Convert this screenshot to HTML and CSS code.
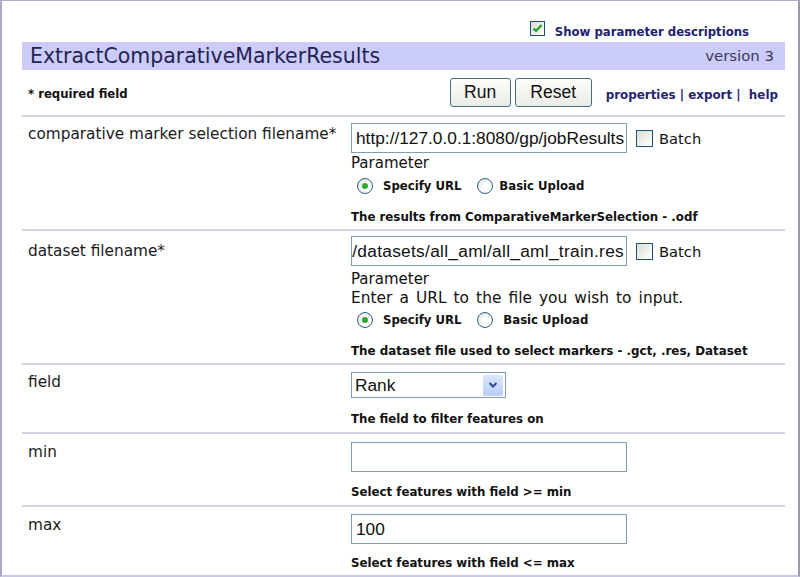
FILE: index.html
```html
<!DOCTYPE html>
<html>
<head>
<meta charset="utf-8">
<link rel="stylesheet" href="styles.css">
</head>
<body>
<div class="frame">
  <div class="topbar">
    <span class="cb checked"><svg viewBox="0 0 15 15" width="15" height="15"><path d="M3.5 7.5 L6 10 L11.5 4" fill="none" stroke="#21a121" stroke-width="2.2"/></svg></span>
    <span class="showdesc">Show parameter descriptions</span>
  </div>
  <div class="titlebar">
    <span class="title">ExtractComparativeMarkerResults</span>
    <span class="version">version 3</span>
  </div>
  <div class="actions">
    <span class="req">* required field</span>
    <div class="btns">
      <button class="btn run">Run</button>
      <button class="btn reset">Reset</button>
      <span class="links">properties | export |&nbsp; help</span>
    </div>
  </div>

  <div class="param p1">
    <div class="label">comparative marker selection filename*</div>
    <div class="ctrl">
      <div class="inrow">
        <div class="input">http://127.0.0.1:8080/gp/jobResults</div>
        <span class="cb batchcb"></span><span class="batch">Batch</span>
      </div>
      <div class="ptext">Parameter</div>
      <div class="radios">
        <span class="radio on"></span><span class="rlabel">Specify URL</span>
        <span class="radio"></span><span class="rlabel second">Basic Upload</span>
      </div>
      <div class="desc">The results from ComparativeMarkerSelection - .odf</div>
    </div>
  </div>

  <div class="param p2">
    <div class="label">dataset filename*</div>
    <div class="ctrl">
      <div class="inrow">
        <div class="input clip"><span>/datasets/all_aml/all_aml_train.res</span></div>
        <span class="cb batchcb"></span><span class="batch">Batch</span>
      </div>
      <div class="ptext">Parameter</div>
      <div class="ptext enter">Enter a URL to the file you wish to input.</div>
      <div class="radios">
        <span class="radio on"></span><span class="rlabel">Specify URL</span>
        <span class="radio"></span><span class="rlabel second">Basic Upload</span>
      </div>
      <div class="desc">The dataset file used to select markers - .gct, .res, Dataset</div>
    </div>
  </div>

  <div class="param p3">
    <div class="label">field</div>
    <div class="ctrl">
      <div class="select"><span>Rank</span><span class="drop"><svg viewBox="0 0 10 8" width="10" height="8"><path d="M1.5 2 L5 5.5 L8.5 2" fill="none" stroke="#2d4a8a" stroke-width="2"/></svg></span></div>
      <div class="desc">The field to filter features on</div>
    </div>
  </div>

  <div class="param p4">
    <div class="label">min</div>
    <div class="ctrl">
      <div class="input"></div>
      <div class="desc">Select features with field &gt;= min</div>
    </div>
  </div>

  <div class="param p5 last">
    <div class="label">max</div>
    <div class="ctrl">
      <div class="input">100</div>
      <div class="desc">Select features with field &lt;= max</div>
    </div>
  </div>
</div>
</body>
</html>
```

FILE: styles.css
```css
* { box-sizing: border-box; }
html, body { margin: 0; padding: 0; background: #fff; }
body { width: 800px; height: 577px; overflow: hidden; font-family: "DejaVu Sans", Verdana, sans-serif; color: #111; }
.frame {
  width: 800px; height: 577px;
  border-left: 2px solid #a8a8c8;
  border-top: 1px solid #b0b0c8;
  border-right: 2px solid #9a9aa8;
  border-bottom: 2px solid #c8c8e0;
  padding: 0 13px 0 20px;
  overflow: hidden;
}
.topbar { height: 41px; display: flex; align-items: flex-end; justify-content: flex-end; padding: 0 36px 3px 0; gap: 10px; }
.cb { display: inline-block; width: 16px; height: 16px; border: 1px solid #1c4f7c; background: linear-gradient(135deg, #dcdcd6, #fff); }
.cb.checked { width: 15px; height: 15px; margin-bottom: 3px; }
.cb svg { display: block; margin: -1px; }
.showdesc { font-size: 11.7px; font-weight: bold; color: #22226e; line-height: 14px; }
.titlebar { height: 28px; background: #ccccfb; display: flex; align-items: center; justify-content: space-between; padding: 0 11px 0 8px; }
.title { font-size: 20.5px; color: #232352; }
.version { font-size: 14.9px; color: #3a3a5a; }
.actions { height: 47px; border-bottom: 2px solid #d4d4e8; display: flex; align-items: flex-start; justify-content: space-between; padding: 8px 7px 0 6px; }
.req { font-size: 11.7px; font-weight: bold; margin-top: 9px; }
.btns { display: flex; align-items: center; }
.btn { font-family: "Liberation Sans", Arial, sans-serif; font-size: 17.5px; height: 29px; border: 1px solid #4d6a84; border-radius: 3px; background: linear-gradient(#fdfdfb, #ecebe6); color: #111; padding: 0; margin-right: 4px; }
.run { width: 61px; }
.reset { width: 77px; margin-right: 14px; }
.links { font-size: 11.9px; font-weight: bold; color: #25256e; margin-top: 4px; }
.param { display: grid; grid-template-columns: 329px 1fr; border-bottom: 2px solid #d4d4e8; }
.param.last { border-bottom: none; }
.label { font-size: 15.3px; line-height: 18px; padding: 8px 0 0 6px; color: #1a1a1a; }
.ctrl { padding-top: 6px; }
.p1 { height: 114px; }
.p2 { height: 134px; }
.p2 .label { padding-top: 11px; }
.p2 .ctrl { padding-top: 5px; }
.p3 { height: 69px; }
.p4 { height: 73px; }
.p4 .label { padding-top: 9px; }
.p5 { height: 70px; }
.p5 .label { padding-top: 9px; }
.inrow { display: flex; align-items: center; gap: 9px; }
.input { width: 276px; height: 30px; border: 1px solid #7f9db9; font-family: "Liberation Sans", Arial, sans-serif; font-size: 17.3px; line-height: 20px; padding: 4px 4px 0 4px; white-space: nowrap; overflow: hidden; background: #fff; }
.input.clip { display: flex; justify-content: flex-end; padding-left: 0; padding-right: 2px; letter-spacing: 0.3px; }
.batchcb { width: 17px; height: 17px; border-color: #1c5180; }
.batch { font-size: 14.7px; margin-left: -3px; }
.ptext { font-size: 15px; line-height: 19px; }
.p1 .ptext { margin-top: 1px; }
.p2 .ptext:nth-child(2) { margin-top: 4px; }
.ptext.enter { font-size: 15.4px; word-spacing: 2.2px; }
.radios { display: flex; align-items: center; padding-left: 6px; height: 24px; margin-top: 1px; }
.p2 .radios { margin-top: 0; }
.radio { width: 16px; height: 16px; border-radius: 50%; border: 1px solid #2c628b; background: radial-gradient(circle at 60% 60%, #fff 30%, #d7d7cf 100%); position: relative; }
.radio.on::after { content: ""; position: absolute; left: 4px; top: 4px; width: 6px; height: 6px; border-radius: 50%; background: #2fa62f; }
.rlabel { font-size: 11.7px; font-weight: bold; margin: 0 16px 0 10px; }
.rlabel.second { margin-left: 6px; margin-right: 0; }
.p2 .rlabel.second { margin-left: 10px; }
.desc { font-size: 11.8px; font-weight: bold; line-height: 14px; margin-top: 12px; }
.p2 .desc { margin-top: 12px; font-size: 11.9px; }
.select { width: 155px; height: 26px; border: 1px solid #7f9db9; display: flex; align-items: center; justify-content: space-between; padding: 0 2px 0 3px; font-family: "Liberation Sans", Arial, sans-serif; font-size: 17.3px; }
.drop { width: 20px; height: 21px; background: linear-gradient(#dce6fb, #b8cdf6); border-radius: 2px; display: flex; align-items: center; justify-content: center; }
.p3 .ctrl { padding-top: 7px; }
.p4 .ctrl { padding-top: 8px; }
.p5 .ctrl { padding-top: 7px; }
.p3 .desc { margin-top: 14px; }
.p4 .desc { margin-top: 13px; }
.p5 .desc { margin-top: 12px; }
```
